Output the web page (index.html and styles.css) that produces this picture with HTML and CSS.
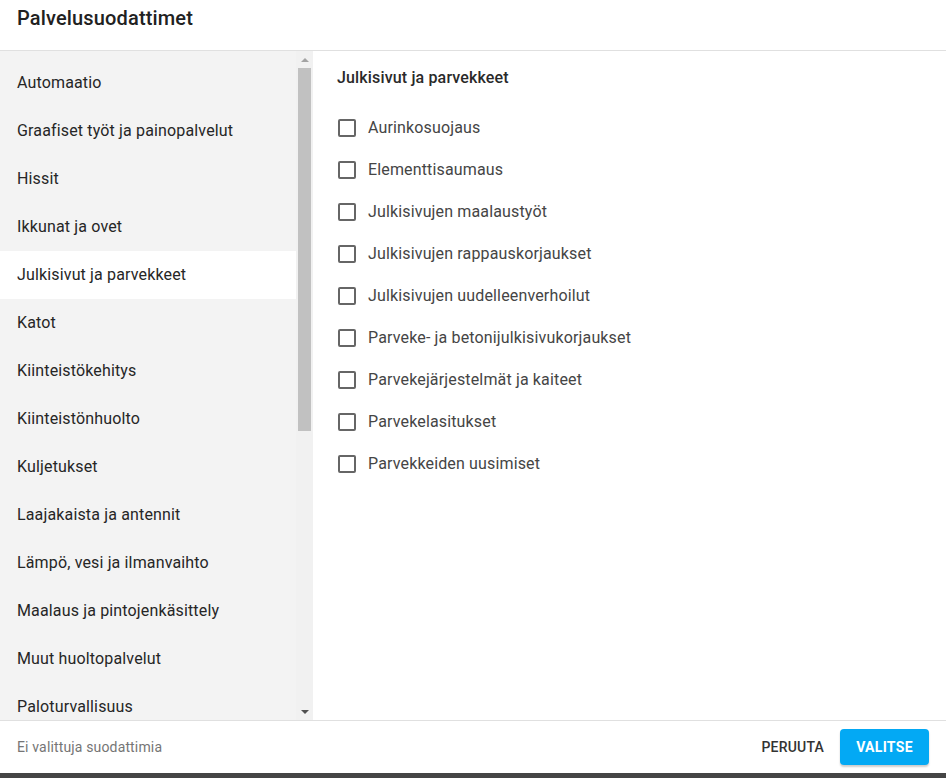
FILE: index.html
```html
<!DOCTYPE html>
<html lang="fi">
<head>
<meta charset="utf-8">
<title>Palvelusuodattimet</title>
<link rel="stylesheet" href="styles.css">
</head>
<body>
<div class="dialog">
  <header class="dialog-header">
    <h1 class="dialog-title">Palvelusuodattimet</h1>
  </header>
  <main class="dialog-body">
    <aside class="category-pane">
      <ul class="category-list">
        <li class="category">Automaatio</li>
        <li class="category">Graafiset työt ja painopalvelut</li>
        <li class="category">Hissit</li>
        <li class="category">Ikkunat ja ovet</li>
        <li class="category is-active">Julkisivut ja parvekkeet</li>
        <li class="category">Katot</li>
        <li class="category">Kiinteistökehitys</li>
        <li class="category">Kiinteistönhuolto</li>
        <li class="category">Kuljetukset</li>
        <li class="category">Laajakaista ja antennit</li>
        <li class="category">Lämpö, vesi ja ilmanvaihto</li>
        <li class="category">Maalaus ja pintojenkäsittely</li>
        <li class="category">Muut huoltopalvelut</li>
        <li class="category">Paloturvallisuus</li>
      </ul>
      <div class="scrollbar">
        <div class="scroll-btn"><span class="arrow arrow-up"></span></div>
        <div class="scroll-track"><div class="scroll-thumb"></div></div>
        <div class="scroll-btn"><span class="arrow arrow-down"></span></div>
      </div>
    </aside>
    <section class="option-pane">
      <h2 class="option-heading">Julkisivut ja parvekkeet</h2>
      <ul class="option-list">
        <li class="option"><span class="checkbox"></span><span>Aurinkosuojaus</span></li>
        <li class="option"><span class="checkbox"></span><span>Elementtisaumaus</span></li>
        <li class="option"><span class="checkbox"></span><span>Julkisivujen maalaustyöt</span></li>
        <li class="option"><span class="checkbox"></span><span>Julkisivujen rappauskorjaukset</span></li>
        <li class="option"><span class="checkbox"></span><span>Julkisivujen uudelleenverhoilut</span></li>
        <li class="option"><span class="checkbox"></span><span>Parveke- ja betonijulkisivukorjaukset</span></li>
        <li class="option"><span class="checkbox"></span><span>Parvekejärjestelmät ja kaiteet</span></li>
        <li class="option"><span class="checkbox"></span><span>Parvekelasitukset</span></li>
        <li class="option"><span class="checkbox"></span><span>Parvekkeiden uusimiset</span></li>
      </ul>
    </section>
  </main>
  <footer class="dialog-footer">
    <span class="selection-info">Ei valittuja suodattimia</span>
    <div class="actions">
      <button class="btn btn-text">Peruuta</button>
      <button class="btn btn-primary">Valitse</button>
    </div>
  </footer>
  <div class="bottom-strip"></div>
</div>
</body>
</html>
```

FILE: styles.css
```css
* { box-sizing: border-box; }
html, body { margin: 0; padding: 0; }
body {
  font-family: Roboto, "Liberation Sans", Arial, sans-serif;
  color: #212121;
  background: #fff;
}
.dialog {
  width: 946px;
  height: 778px;
  display: flex;
  flex-direction: column;
  overflow: hidden;
}
.dialog-header {
  height: 51px;
  border-bottom: 1px solid #e0e0e0;
  display: flex;
  align-items: flex-start;
  padding: 6px 17px 0;
}
.dialog-title {
  margin: 0;
  font-size: 20px;
  font-weight: 500;
  line-height: 24px;
  color: #212121;
  letter-spacing: 0.15px;
}
.dialog-body {
  height: 670px;
  display: flex;
  border-bottom: 1px solid #e0e0e0;
}
.category-pane {
  width: 313px;
  background: #f3f3f3;
  display: flex;
  overflow: hidden;
}
.category-list {
  list-style: none;
  margin: 0;
  padding: 8px 0 0;
  flex: 1;
  overflow: hidden;
}
.category {
  height: 48px;
  display: flex;
  align-items: center;
  padding: 0 0 2px 17px;
  font-size: 16px;
  letter-spacing: 0.15px;
  color: #262626;
}
.category.is-active { background: #fff; }
.scrollbar {
  width: 17px;
  background: #f1f1f1;
  display: flex;
  flex-direction: column;
}
.scroll-btn {
  height: 17px;
  display: flex;
  align-items: center;
  justify-content: center;
}
.scroll-track {
  flex: 1;
  padding: 0 2px;
}
.scroll-thumb {
  height: 363px;
  background: #c1c1c1;
}
.arrow {
  width: 0;
  height: 0;
  border-left: 4px solid transparent;
  border-right: 4px solid transparent;
}
.arrow-up { border-bottom: 4px solid #a3a3a3; }
.arrow-down { border-top: 4px solid #505050; }
.option-pane {
  flex: 1;
  background: #fff;
  padding: 17px 24px 0;
}
.option-heading {
  margin: 0 0 19px;
  font-size: 16px;
  font-weight: 500;
  line-height: 20px;
  letter-spacing: 0.15px;
  color: #2a2a2a;
}
.option-list {
  list-style: none;
  margin: 0;
  padding: 0;
}
.option {
  height: 42px;
  display: flex;
  align-items: center;
  gap: 12px;
  font-size: 16px;
  letter-spacing: 0.15px;
  color: #454545;
  padding-left: 1px;
}
.option span:last-child { padding-bottom: 2px; }
.checkbox {
  width: 18px;
  height: 18px;
  border: 2px solid #666;
  border-radius: 2px;
  flex: none;
}
.dialog-footer {
  height: 52px;
  display: flex;
  align-items: center;
  justify-content: space-between;
  padding: 0 17px;
}
.selection-info {
  font-size: 14px;
  color: #757575;
  letter-spacing: 0.15px;
}
.actions {
  display: flex;
  align-items: center;
  gap: 16px;
}
.btn {
  font-family: inherit;
  font-size: 14px;
  font-weight: 500;
  text-transform: uppercase;
  border: none;
  cursor: pointer;
}
.btn-text {
  background: none;
  color: #333;
  padding: 0;
  letter-spacing: 0.2px;
}
.btn-primary {
  background: #03a9f4;
  color: #fff;
  font-weight: 700;
  height: 36px;
  width: 89px;
  border-radius: 4px;
  box-shadow: 0 2px 2px rgba(0,0,0,0.2);
  letter-spacing: 0.3px;
}
.bottom-strip {
  height: 5px;
  background: #454545;
}
```
